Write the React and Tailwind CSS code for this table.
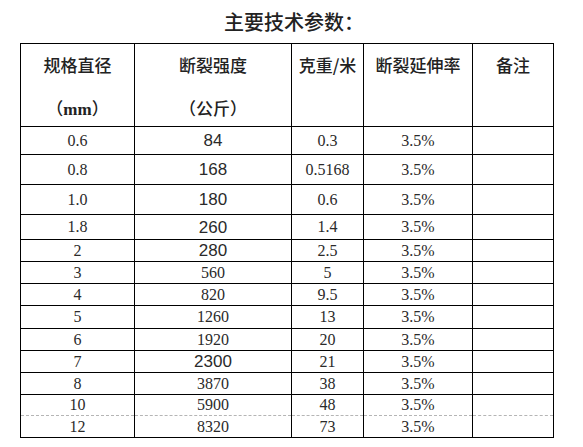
const rows = [
  { d: '0.6', s: '84', w: '0.3', h: 'h-[28px]', sans: true },
  { d: '0.8', s: '168', w: '0.5168', h: 'h-[30px]', sans: true },
  { d: '1.0', s: '180', w: '0.6', h: 'h-[30px]', sans: true },
  { d: '1.8', s: '260', w: '1.4', h: 'h-[25px]', sans: true },
  { d: '2', s: '280', w: '2.5', h: 'h-[22px]', sans: true },
  { d: '3', s: '560', w: '5', h: 'h-[22px]' },
  { d: '4', s: '820', w: '9.5', h: 'h-[22px]' },
  { d: '5', s: '1260', w: '13', h: 'h-[23px]' },
  { d: '6', s: '1920', w: '20', h: 'h-[22px]' },
  { d: '7', s: '2300', w: '21', h: 'h-[22px]', sans: true },
  { d: '8', s: '3870', w: '38', h: 'h-[22px]' },
  { d: '10', s: '5900', w: '48', h: 'h-[21px]', cut: 'bottom' },
  { d: '12', s: '8320', w: '73', h: 'h-[22px]', cut: 'top' },
];

const serif = "font-['Liberation_Serif','Noto_Sans_CJK_SC',serif]";
const sans = "font-['Liberation_Sans',sans-serif] text-[17px]";

// page-break line between 10 and 12: grey and dashed on both touching sides
const border = (cut) => {
  if (cut === 'bottom') return 'border border-black border-b-[#b5b5b5] [border-bottom-style:dashed]';
  if (cut === 'top') return 'border border-black border-t-[#b5b5b5] [border-top-style:dashed]';
  return 'border border-black';
};

export default function App() {
  return (
    <div className="w-[583px] h-[447px] bg-white text-[#2a2a2a] font-['Noto_Sans_CJK_SC',sans-serif]">
      <div className="pt-[9px] pl-[224px] h-[43px] text-[20px] leading-[26px] font-medium text-[#222]">主要技术参数：</div>
      <table className="ml-[20px] border-collapse w-[533px] table-fixed">
        <colgroup>
          <col className="w-[114px]" />
          <col className="w-[157px]" />
          <col className="w-[72px]" />
          <col className="w-[109px]" />
          <col className="w-[81px]" />
        </colgroup>
        <thead>
          <tr className="h-[83px] align-top text-[17px] text-[#222]">
            <th className="border border-black pt-[9px] font-medium">
              <div className="leading-[24px]">规格直径</div>
              <div className="leading-[24px] mt-[19px]">（<span className={serif + ' font-bold'}>mm</span>）</div>
            </th>
            <th className="border border-black pt-[9px] font-medium">
              <div className="leading-[24px]">断裂强度</div>
              <div className="leading-[24px] mt-[19px]">（公斤）</div>
            </th>
            <th className="border border-black pt-[9px] font-medium whitespace-nowrap">
              <div className="leading-[24px]">克重/米</div>
            </th>
            <th className="border border-black pt-[9px] font-medium whitespace-nowrap">
              <div className="leading-[24px]">断裂延伸率</div>
            </th>
            <th className="border border-black pt-[9px] font-medium">
              <div className="leading-[24px]">备注</div>
            </th>
          </tr>
        </thead>
        <tbody className="text-[16px] text-center">
          {rows.map((r) => {
            const b = border(r.cut);
            return (
              <tr key={r.d} className={r.h + ' leading-none'}>
                <td className={b + ' ' + serif}>{r.d}</td>
                <td className={b + ' ' + (r.sans ? sans : serif)}>{r.s}</td>
                <td className={b + ' ' + serif}>{r.w}</td>
                <td className={b + ' ' + serif}>3.5%</td>
                <td className={b}></td>
              </tr>
            );
          })}
        </tbody>
      </table>
    </div>
  );
}
